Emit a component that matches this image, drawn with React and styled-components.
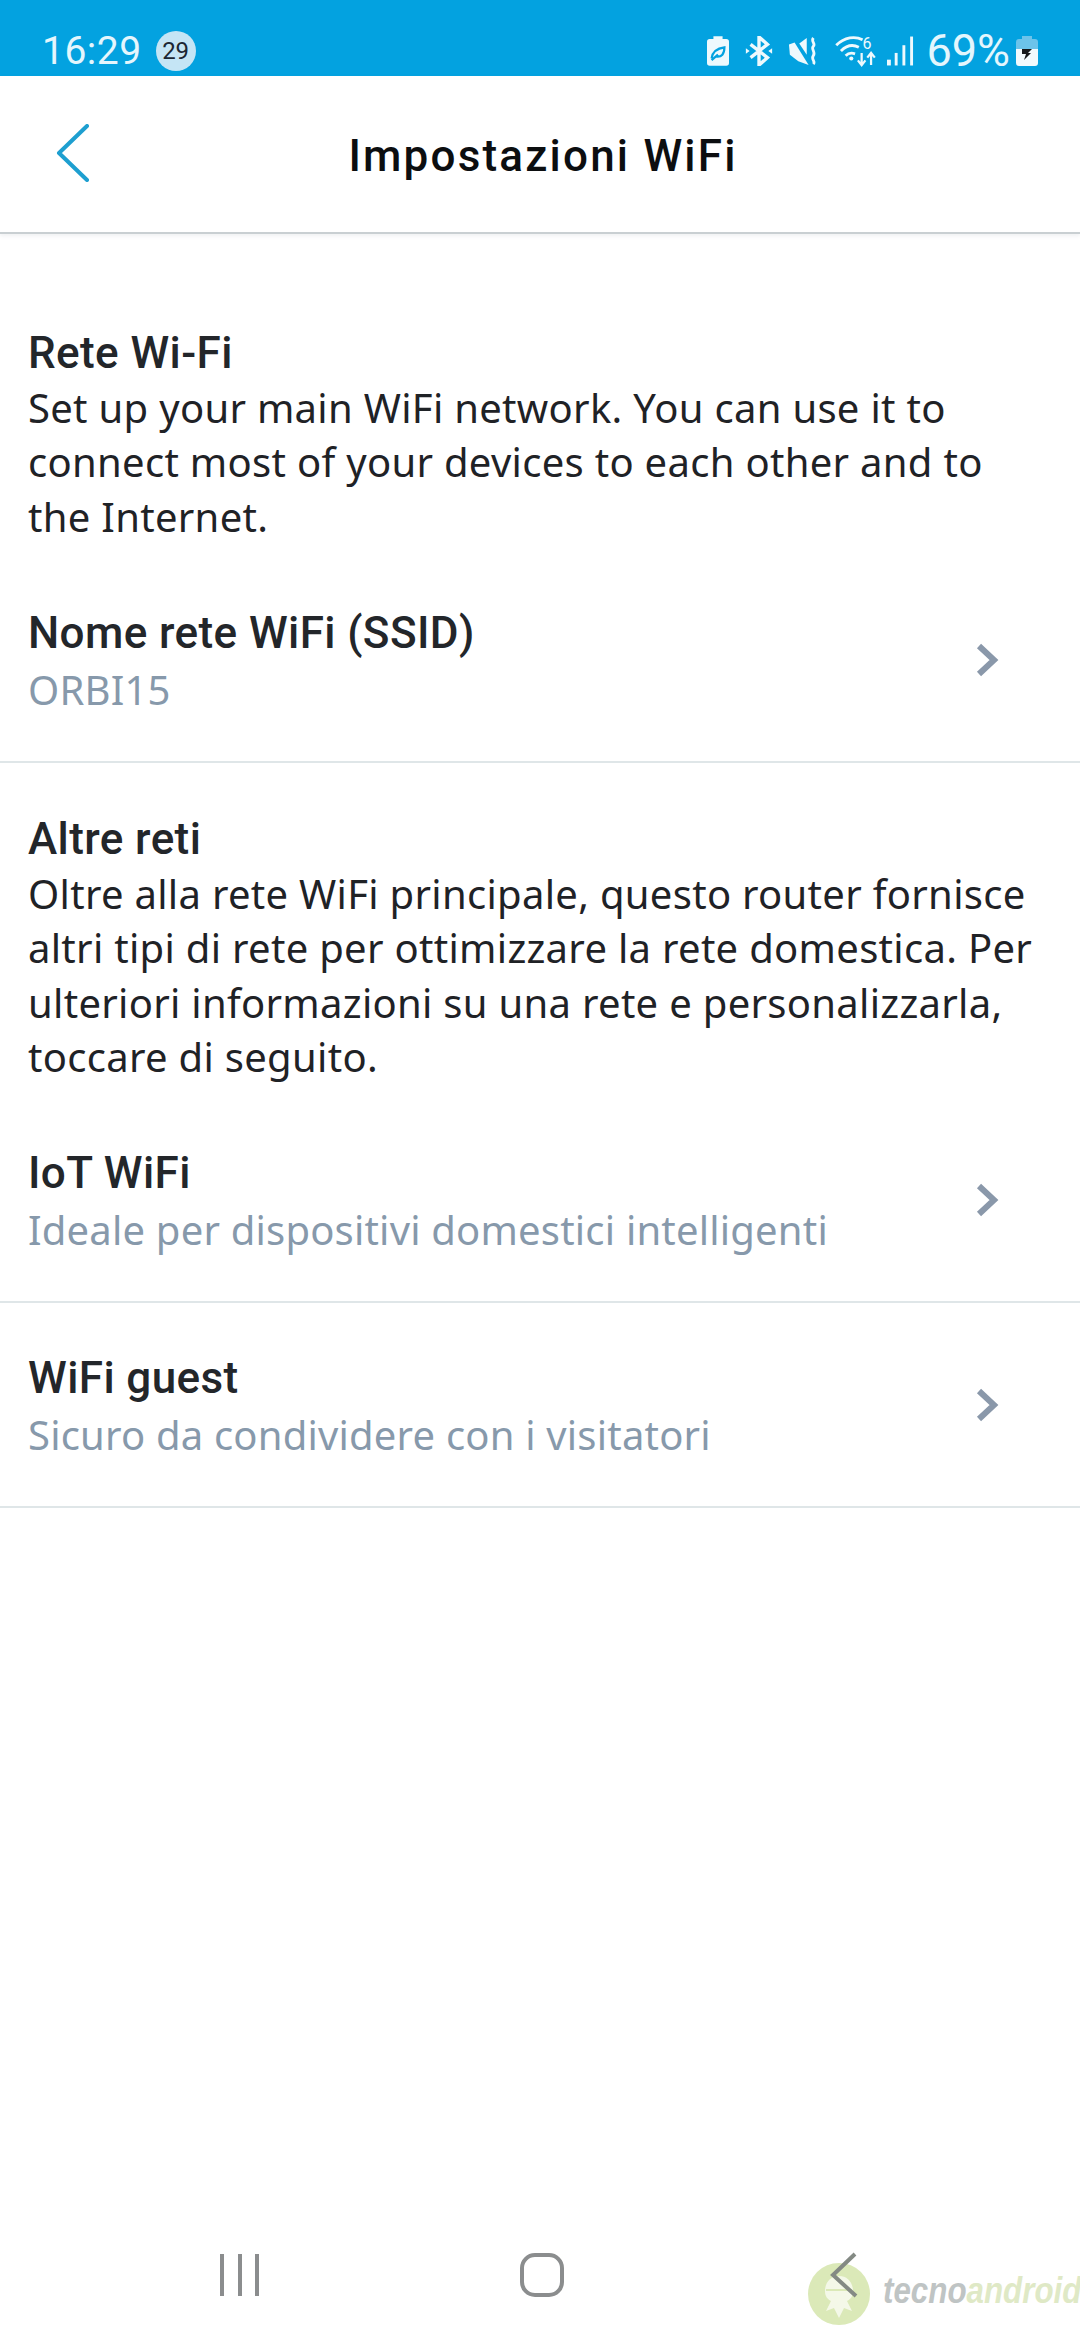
import React from 'react'
import styled, { createGlobalStyle } from 'styled-components'

const GlobalStyle = createGlobalStyle`
html, body {
    margin: 0;
    padding: 0;
    background: #fff;
}
`

const Page = styled.div`
width: 1080px;
height: 2340px;
display: flex;
flex-direction: column;
position: relative;
overflow: hidden;
background: #fff;
font-family: "Noto Sans", "Liberation Sans", sans-serif;
color: #1f2226;
`

const StatusBar = styled.div`
height: 76px;
flex-shrink: 0;
box-sizing: border-box;
padding: 26px 42px 0 42px;
background: #03a2e0;
display: flex;
align-items: center;
justify-content: space-between;
color: #e4f6fd;
`

const StatusLeft = styled.div`
display: flex;
align-items: center;
gap: 14px;
`

const StatusRight = styled.div`
display: flex;
align-items: center;
`

const Clock = styled.span`
font-family: Roboto, "Liberation Sans", sans-serif;
font-size: 39px;
line-height: 44px;
letter-spacing: 0.5px;
`

const Badge = styled.span`
width: 40px;
height: 40px;
border-radius: 50%;
background: #c5e5f5;
color: #1b2733;
font-family: Roboto, "Liberation Sans", sans-serif;
font-size: 24px;
display: flex;
align-items: center;
justify-content: center;
`

const Percent = styled.span`
font-family: Roboto, "Liberation Sans", sans-serif;
font-size: 45px;
line-height: 44px;
margin: 0 6px 0 12px;
`

const StatusIcon = styled.svg`
display: block;
margin-right: ${p => p.$gap || 0}px;
`

const Header = styled.header`
height: 158px;
flex-shrink: 0;
box-sizing: border-box;
padding-top: 3px;
display: flex;
align-items: center;
justify-content: center;
position: relative;
background: #fff;
border-bottom: 2px solid #c9cfd2;
box-shadow: 0 2px 4px rgba(120, 135, 145, 0.12);
`

const BackButton = styled.svg`
position: absolute;
left: 56px;
top: 48px;
`

const Title = styled.h1`
margin: 0 0 0 6px;
font-family: Roboto, "Liberation Sans", sans-serif;
font-size: 44px;
font-weight: 500;
letter-spacing: 2.2px;
color: #0c0e10;
`

const Section = styled.section`
padding: ${p => p.$top}px 28px 0;
`

const Heading = styled.h2`
margin: 0;
font-family: Roboto, "Liberation Sans", sans-serif;
font-size: 44px;
line-height: 54.5px;
font-weight: 500;
letter-spacing: 0.4px;
color: #23262a;
`

const Body = styled.p`
margin: 0;
font-size: 40px;
line-height: 54.5px;
letter-spacing: 0.3px;
color: #1f2226;
`

const Row = styled.div`
display: flex;
align-items: center;
justify-content: space-between;
box-sizing: border-box;
padding: ${p => p.$top}px 81px 42px 28px;
border-bottom: 2px solid #dfe6e8;
`

const RowText = styled.div`
display: flex;
flex-direction: column;
`

const RowTitle = styled.div`
font-family: Roboto, "Liberation Sans", sans-serif;
font-size: 44px;
line-height: 56px;
font-weight: 500;
letter-spacing: 0.4px;
color: #23262a;
`

const RowSub = styled.div`
font-size: 40px;
line-height: 58px;
letter-spacing: 0.2px;
color: #8799ab;
`

const Chevron = styled.svg`
display: block;
margin-bottom: 4px;
`

const NavBar = styled.nav`
margin-top: auto;
height: 148px;
display: flex;
align-items: flex-start;
box-sizing: border-box;
padding: 0 0 0 218px;
position: relative;
z-index: 1;
`

const NavIcon = styled.svg`
display: block;
margin-top: ${p => p.$top}px;
margin-right: ${p => p.$gap}px;
`

const Watermark = styled.div`
position: absolute;
left: 808px;
top: 2263px;
display: flex;
align-items: center;
gap: 13px;
`

const MarkText = styled.span`
display: inline-block;
font-family: "Liberation Sans", sans-serif;
font-size: 36px;
font-weight: 700;
font-style: italic;
white-space: nowrap;
transform: scaleX(0.87);
transform-origin: left center;
margin-top: -6px;
margin-right: -30px;
color: #bfc4c4;
`

const MarkAccent = styled.span`
color: #dfe9c6;
`

const RowChevron = () => (
    <Chevron width="24" height="36" viewBox="0 0 24 36">
        <path d="M4 4 L19 18 L4 32" fill="none" stroke="#8a98aa" strokeWidth="6" />
    </Chevron>
)

const rows = {
    ssid: { title: 'Nome rete WiFi (SSID)', sub: 'ORBI15' },
    iot: { title: 'IoT WiFi', sub: 'Ideale per dispositivi domestici intelligenti' },
    guest: { title: 'WiFi guest', sub: 'Sicuro da condividere con i visitatori' }
}

const SettingRow = ({ item, top }) => (
    <Row $top={top}>
        <RowText>
            <RowTitle>{item.title}</RowTitle>
            <RowSub>{item.sub}</RowSub>
        </RowText>
        <RowChevron />
    </Row>
)

const App = () => {
    return (
        <Page>
            <GlobalStyle />
            <StatusBar>
                <StatusLeft>
                    <Clock>16:29</Clock>
                    <Badge>29</Badge>
                </StatusLeft>
                <StatusRight>
                    {/* eco battery */}
                    <StatusIcon $gap={16} width="22" height="30" viewBox="0 0 24 32">
                        <path d="M7 0h10v3h4a3 3 0 0 1 3 3v23a3 3 0 0 1-3 3H3a3 3 0 0 1-3-3V6a3 3 0 0 1 3-3h4z" fill="#eef9fd" />
                        <path d="M5 24c1-7 6-11 14-12 0 7-3 11-9 10M5 26l7-6" fill="none" stroke="#03a2e0" strokeWidth="2.4" />
                    </StatusIcon>
                    {/* bluetooth */}
                    <StatusIcon $gap={15} width="28" height="30" viewBox="0 0 28 32">
                        <path d="M5 9l18 14-9 8V1l9 8L5 23" fill="none" stroke="#eef9fd" strokeWidth="3.6" />
                        <path d="M0 13l4 3-4 3zM28 13l-4 3 4 3z" fill="#eef9fd" />
                    </StatusIcon>
                    {/* vibrate + mute */}
                    <StatusIcon $gap={16} width="30" height="30" viewBox="0 0 30 32">
                        <path d="M0 9l6-2 15 24-11-4-9-7z" fill="#eef9fd" />
                        <path d="M11 8l8-6v18z" fill="#eef9fd" />
                        <path d="M26 2c-3 4 3 6 0 9s3 6 0 10 3 6 0 9" fill="none" stroke="#eef9fd" strokeWidth="3" />
                    </StatusIcon>
                    {/* wifi 6 with arrows */}
                    <StatusIcon $gap={9} width="44" height="32" viewBox="0 0 44 34">
                        <path d="M1 11c9-9 20-10 28-6M6 17c6-6 13-7 19-4M11 22c3-3 7-3 10-2" fill="none" stroke="#eef9fd" strokeWidth="3" />
                        <circle cx="17" cy="25" r="2.2" fill="#eef9fd" />
                        <text x="29" y="15" fontSize="17" fontFamily="Roboto, sans-serif" fill="#eef9fd">6</text>
                        <path d="M28 19v12M24 27l4 5 4-5M38 32V20M34 24l4-5 4 5" fill="none" stroke="#eef9fd" strokeWidth="2.4" />
                    </StatusIcon>
                    {/* signal */}
                    <StatusIcon width="27" height="30" viewBox="0 0 28 30">
                        <rect x="0" y="24" width="4" height="6" fill="#eef9fd" />
                        <rect x="8" y="17" width="3" height="13" fill="#eef9fd" />
                        <rect x="16" y="9" width="3" height="21" fill="#eef9fd" />
                        <rect x="24" y="0" width="3" height="30" fill="#eef9fd" />
                    </StatusIcon>
                    <Percent>69%</Percent>
                    {/* charging battery */}
                    <StatusIcon width="22" height="30" viewBox="0 0 22 30">
                        <path d="M6 0h10v3h3a3 3 0 0 1 3 3v7H0V6a3 3 0 0 1 3-3h3z" fill="#6cc3ea" />
                        <path d="M0 13h22v14a3 3 0 0 1-3 3H3a3 3 0 0 1-3-3z" fill="#f2fafd" />
                        <path d="M6 13h10l-4 4h3l-7 7 2-6H6z" fill="#15181a" />
                    </StatusIcon>
                </StatusRight>
            </StatusBar>

            <Header>
                <BackButton width="34" height="58" viewBox="0 0 34 58">
                    <path d="M31 2 L3 29 L31 56" fill="none" stroke="#1e9fd0" strokeWidth="4" strokeLinecap="round" strokeLinejoin="round" />
                </BackButton>
                <Title>Impostazioni WiFi</Title>
            </Header>

            <Section $top={92}>
                <Heading>Rete Wi-Fi</Heading>
                <Body>
                    Set up your main WiFi network. You can use it to<br />
                    connect most of your devices to each other and to<br />
                    the Internet.
                </Body>
            </Section>
            <SettingRow item={rows.ssid} top={61} />

            <Section $top={49}>
                <Heading>Altre reti</Heading>
                <Body>
                    Oltre alla rete WiFi principale, questo router fornisce<br />
                    altri tipi di rete per ottimizzare la rete domestica. Per<br />
                    ulteriori informazioni su una rete e personalizzarla,<br />
                    toccare di seguito.
                </Body>
            </Section>
            <SettingRow item={rows.iot} top={60} />
            <SettingRow item={rows.guest} top={47} />

            <NavBar>
                <NavIcon $top={62} $gap={258} width="44" height="42" viewBox="0 0 44 42">
                    <path d="M4 0v42M22 0v42M39 0v42" stroke="#8b8d8e" strokeWidth="4" />
                </NavIcon>
                <NavIcon $top={61} $gap={265} width="44" height="44" viewBox="0 0 44 44">
                    <rect x="2" y="2" width="40" height="40" rx="13" fill="none" stroke="#8b8d8e" strokeWidth="4" />
                </NavIcon>
                <NavIcon $top={60} $gap={0} width="30" height="46" viewBox="0 0 30 46">
                    <path d="M26 2 L4 23 L27 44" fill="none" stroke="#848a84" strokeWidth="4" />
                </NavIcon>
            </NavBar>

            <Watermark>
                <svg width="62" height="62" viewBox="0 0 62 62">
                    <circle cx="31" cy="31" r="31" fill="#dbe9b8" />
                    <path d="M17 28c0-9 6-15 14-15s14 6 14 15c0 5-2 8-6 10l5 10-8-3-5 10-5-10-8 3 5-10c-4-2-6-5-6-10z" fill="#f4f8e8" />
                    <path d="M18 27h26" stroke="#dbe9b8" strokeWidth="2" />
                </svg>
                <MarkText>tecno<MarkAccent>android</MarkAccent></MarkText>
            </Watermark>
        </Page>
    )
}

export default App
